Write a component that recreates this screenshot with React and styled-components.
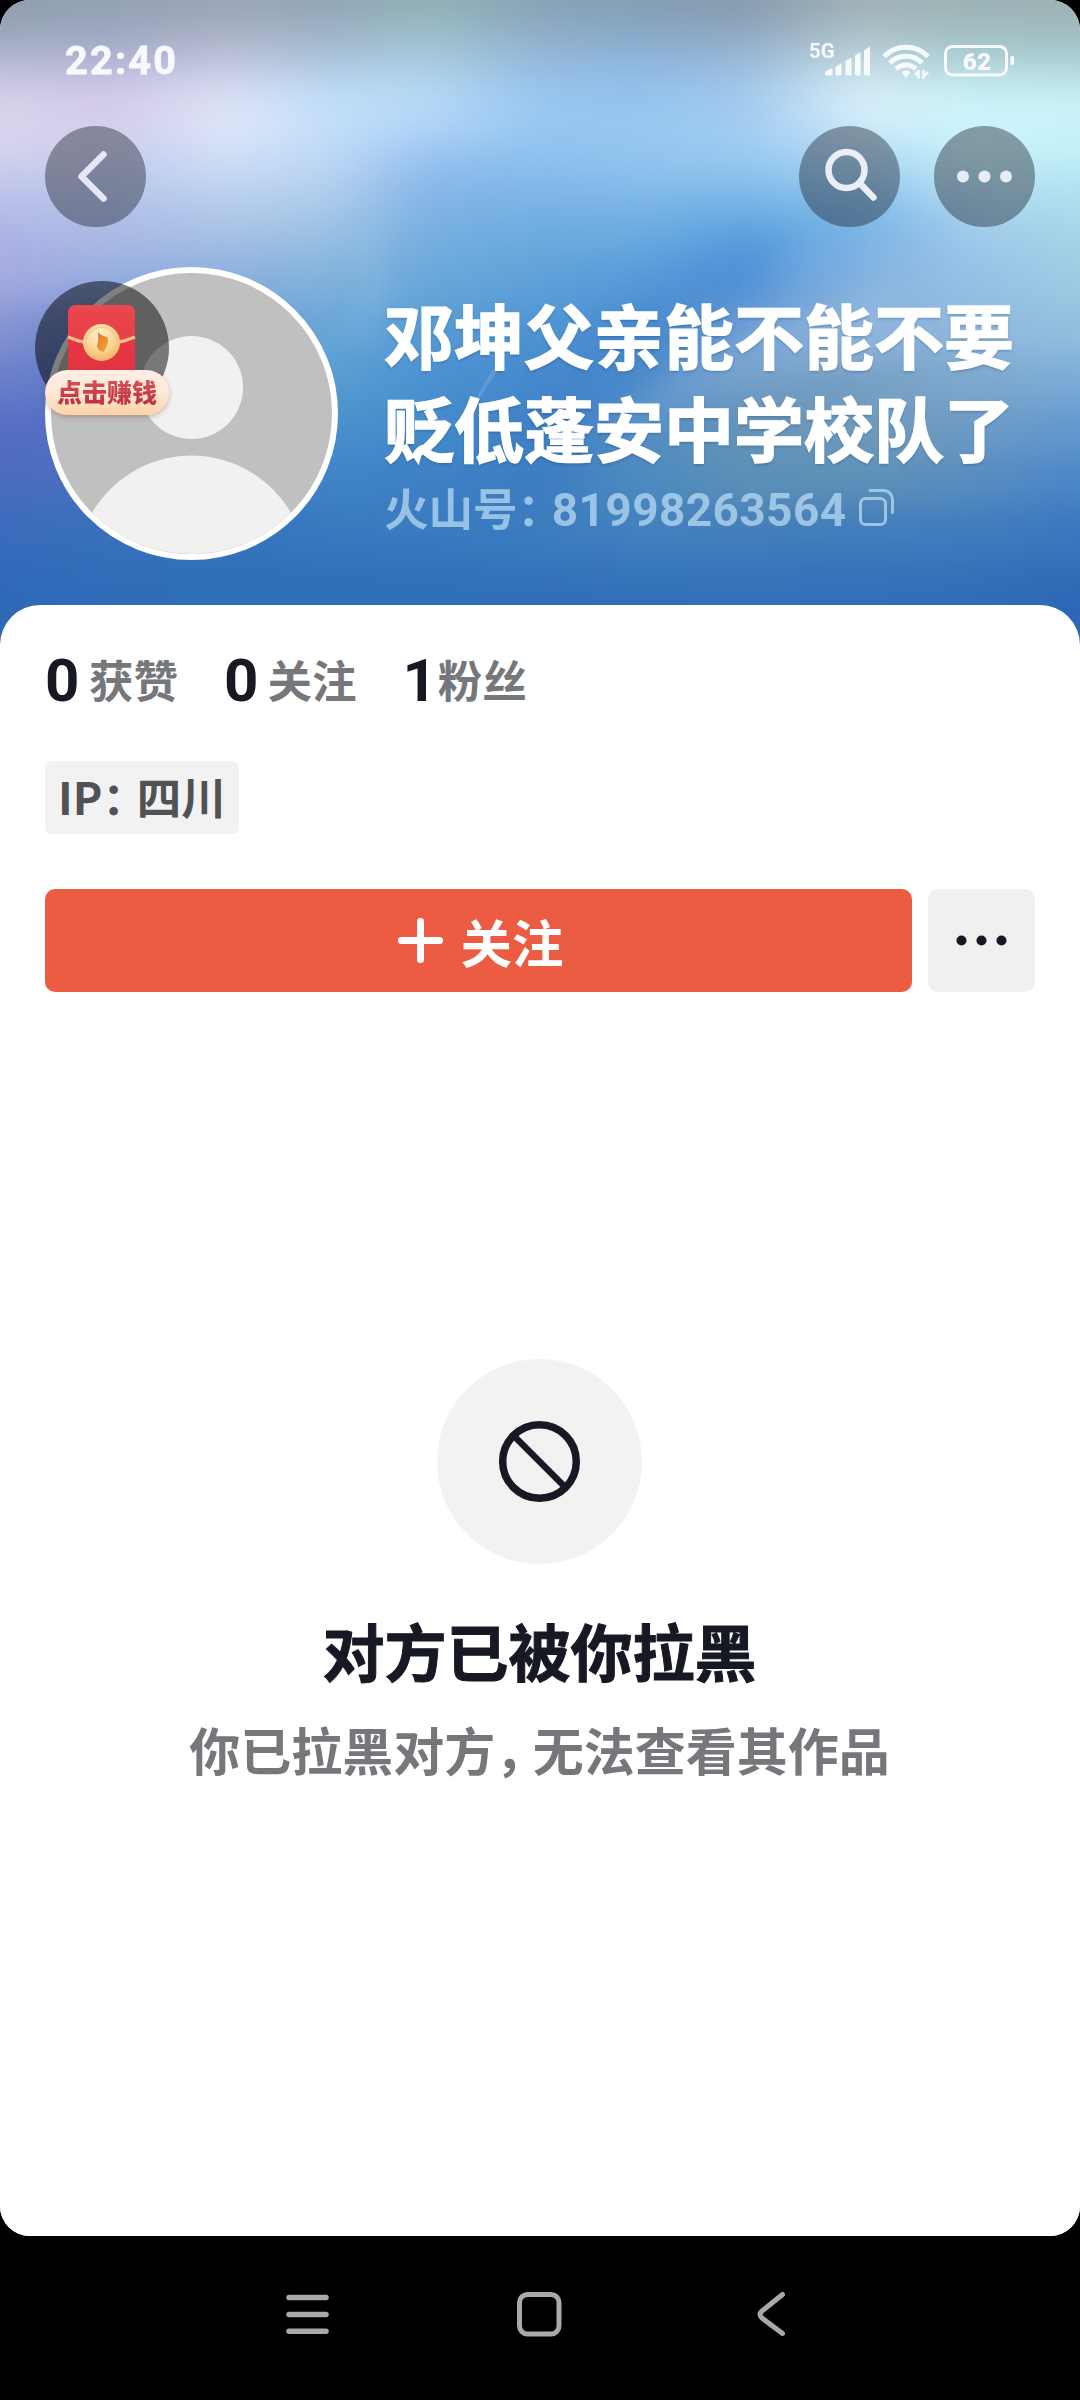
import React from 'react';
import styled, { createGlobalStyle } from 'styled-components';

const GlobalStyle = createGlobalStyle`
  * {
    box-sizing: border-box;
  }

  body {
    margin: 0;
    background: #000;
    font-family: 'Noto Sans CJK SC', sans-serif;
    font-weight: 700;
  }

  svg {
    display: block;
    flex: none;
  }
`;

const Phone = styled.div`
  width: 1080px;
  height: 2400px;
  background: #000;
  display: flex;
  flex-direction: column;
`;

const Screen = styled.div`
  height: 2236px;
  border-radius: 30px;
  overflow: hidden;
  background: #fff;
  display: flex;
  flex-direction: column;
`;

const Header = styled.header`
  position: relative;
  height: 645px;
  margin-bottom: -40px;
  flex: none;
`;

const CoverSvg = styled.svg`
  position: absolute;
  top: 0;
  left: 0;
`;

const HeaderContent = styled.div`
  position: relative;
  display: flex;
  flex-direction: column;
`;

const StatusBar = styled.div`
  height: 126px;
  padding: 0 66px 6px 65px;
  display: flex;
  align-items: center;
  justify-content: space-between;
`;

const Clock = styled.span`
  font-family: Roboto, sans-serif;
  font-size: 39.5px;
  line-height: 48px;
  letter-spacing: 2.3px;
  padding-top: 2px;
  color: #f7f9ff;
  -webkit-text-stroke: 0.8px #f7f9ff;
`;

const StatusIcons = styled.div`
  display: flex;
  align-items: center;
`;

const TopBar = styled.div`
  display: flex;
  align-items: center;
  gap: 34px;
  padding: 0 45px;
`;

const RoundButton = styled.button`
  width: 101px;
  height: 101px;
  padding: 0;
  border: none;
  border-radius: 50%;
  background: rgba(22, 24, 35, 0.4);
  margin-right: ${(props) => (props.$pushRest ? 'auto' : '0')};
`;

const Profile = styled.div`
  display: flex;
  padding: 40px 45px 0;
  gap: 46px;
`;

const AvatarWrap = styled.div`
  position: relative;
  width: 293px;
  height: 293px;
  flex: none;
`;

const Avatar = styled.div`
  width: 293px;
  height: 293px;
  border: 6px solid #fff;
  border-radius: 50%;
  overflow: hidden;
  background: #c0c0c0;
`;

const EarnWidget = styled.div`
  position: absolute;
  left: -10px;
  top: 14px;
  width: 134px;
  height: 134px;
  border-radius: 50%;
  background: rgba(0, 0, 0, 0.5);
`;

const EarnLabel = styled.div`
  position: absolute;
  left: 10px;
  top: 89px;
  width: 124px;
  height: 45px;
  border-radius: 23px;
  background: linear-gradient(#fdeee6, #fce9d6 50%, #fdd3a4);
  box-shadow: 0 2px 5px rgba(120, 70, 40, 0.35);
  text-align: center;

  span {
    font-size: 25px;
    line-height: 43px;
    font-weight: 900;
    white-space: nowrap;
    color: transparent;
    background: linear-gradient(#dd5a5f, #b82a42);
    background-clip: text;
  }
`;

const Info = styled.div`
  padding-top: 20px;
  flex: 1;
`;

const Name = styled.h1`
  margin: 0;
  font-size: 70px;
  line-height: 93px;
  font-weight: 700;
  color: #fff;
  -webkit-text-stroke: 1.4px #fff;
  text-shadow: 0 2px 3px rgba(0, 30, 80, 0.25);
`;

const UserId = styled.div`
  display: flex;
  align-items: center;
  gap: 12px;
  margin-top: 4px;
  font-size: 44.5px;
  line-height: 60px;
  color: rgba(184, 217, 240, 0.75);
`;

/* full-width punctuation set at half width */
const Punctuation = styled.span`
  font-feature-settings: 'halt';
  margin-right: 12px;
`;

const Digits = styled.span`
  font-family: Roboto, sans-serif;
  font-size: 46px;
  line-height: 1;
  letter-spacing: 0.4px;
`;

const Sheet = styled.main`
  position: relative;
  flex: 1;
  padding: 36px 45px 0;
  border-radius: 40px 40px 0 0;
  background: #fff;
`;

const Stats = styled.div`
  display: flex;
  height: 70px;
  align-items: center;
`;

const Stat = styled.div`
  display: flex;
  align-items: center;
  margin-right: 46px;
`;

const StatValue = styled.span`
  font-family: Roboto, sans-serif;
  font-size: 60px;
  line-height: 60px;
  padding-top: 9px;
  color: #161823;
  margin-right: ${(props) => props.$gap}px;
`;

const StatLabel = styled.span`
  font-size: 44.5px;
  line-height: 64px;
  padding-top: 6px;
  color: #75777b;
`;

const IpTag = styled.div`
  width: 194px;
  height: 73px;
  margin-top: 50px;
  padding: 5px 0 0 13px;
  border-radius: 6px;
  background: #f2f2f3;
  font-size: 44.5px;
  line-height: 60px;
  white-space: nowrap;
  color: #505255;
`;

const Actions = styled.div`
  display: flex;
  gap: 16px;
  margin-top: 55px;
`;

const FollowButton = styled.button`
  flex: 1;
  height: 103px;
  border: none;
  border-radius: 10px;
  padding: 0 0 0 5px;
  background: #eb5c42;
  color: #fff;
  font: inherit;
  font-size: 51.5px;
  line-height: 70px;
  display: flex;
  align-items: center;
  justify-content: center;
  gap: 17px;
`;

const MoreButton = styled.button`
  width: 107px;
  height: 103px;
  border: none;
  border-radius: 10px;
  padding: 0;
  background: #f0f0f0;
`;

const Empty = styled.section`
  display: flex;
  flex-direction: column;
  align-items: center;
  padding: 367px 1px 0 0;
`;

const BlockIcon = styled.div`
  width: 205px;
  height: 205px;
  border-radius: 50%;
  background: #f2f2f2;
`;

const EmptyTitle = styled.h2`
  margin: 41px 0 0;
  font-size: 62px;
  line-height: 90px;
  font-weight: 700;
  color: #161823;
  -webkit-text-stroke: 1px #161823;
`;

const EmptyText = styled.p`
  margin: 19px 0 0;
  font-size: 51px;
  line-height: 70px;
  color: #75777b;
`;

const NavBar = styled.nav`
  display: flex;
  justify-content: space-between;
  padding: 50px 281px 0 279px;
`;

// Colour stops of the cover, one row of stops per y position
const coverStops = [0, 110, 230, 330, 430, 540, 640, 740, 860, 970, 1080];
const coverRows = [
  { y: 0, colors: ['8f9ead', '93a1b1', '9aa4b6', '8fa5b5', '91b0b5', '87a1b4', '849cb3', '8599ab', '9fb0b5', '9bb2b4', '9cb0b4'] },
  { y: 30, colors: ['98a5b8', '9ba7bf', 'a8afc2', '9cb1c4', '9abcc4', '8eacc4', '88a8c4', '8da6bd', 'abbec5', 'a1bcc0', 'a2bbbf'] },
  { y: 60, colors: ['b4b6d0', 'b0b4d2', 'bfc4dd', 'aac4dc', 'a9cbdd', '94b9dc', '8eb4db', '98b8d9', 'c0d7e0', 'acd0d5', 'abcfd3'] },
  { y: 90, colors: ['d2cde8', 'd2c8e7', 'd9def3', 'bddcf6', 'b4d8f4', '97c4ee', '92c1ec', '9fc7ea', 'd6edf6', 'c8eff6', 'c4edf4'] },
  { y: 120, colors: ['dcd6ee', 'd5cdeb', 'dfe7fa', 'c3e0fb', 'b6d8f8', '9ac8f1', '98c7f1', 'a2cbf0', 'd6eefb', 'cff6fd', 'ccf4fb'] },
  { y: 150, colors: ['d5d3ee', 'ccceec', 'd4e1f7', 'bfdaf7', '9dc6f1', '8ec2ee', '95c6f0', '9bcbf0', 'b5ddf6', 'c9f1fb', 'c3f0f8'] },
  { y: 180, colors: ['c5c8eb', 'bccaed', 'c2d7f2', 'b6d1f0', '89b8ea', '84baea', '89bdeb', '89bfec', '9accef', 'b9e3f5', 'b4e6f2'] },
  { y: 210, colors: ['b5bce8', 'b0c0e8', 'b3cbea', 'a8c9e8', '7fb2e4', '76b1e3', '78b3e5', '6dafe4', '7ab8e6', 'a9d2ef', 'addbea'] },
  { y: 240, colors: ['adb2e4', 'a9b8e3', 'a3bee3', '95bee1', '74aedf', '6aaade', '67a9de', '569cde', '7ab2e4', '9ec7ea', 'a3d4e7'] },
  { y: 280, colors: ['a3a9df', '93ace0', '8aafdb', '80b2db', '68a7d9', '5ea0d8', '5699d8', '5394d8', '86b3e0', '96bfe5', '9dcce3'] },
  { y: 330, colors: ['8594d3', '6787c9', '6596cf', '6aa8d8', '579bd4', '4e94d2', '4a8dd1', '6a9cd4', '88b0d9', '8fb9dd', '94bfde'] },
  { y: 380, colors: ['6b7fca', '5776c6', '5886c8', '589ed2', '4b91cf', '4488cd', '4f8bcb', '6d9bc5', '769fc4', '7ea8ce', '7cacd7'] },
  { y: 430, colors: ['556cc5', '5370c3', '4c7cc2', '4890cd', '438bc9', '4080c7', '538ec6', '6594b9', '6f9abb', '6d9ac3', '6198cf'] },
  { y: 480, colors: ['4a6bc0', '4970bf', '4077c0', '3f84c7', '3e80c6', '3f7ec2', '4c8abf', '5b90b7', '5e91b8', '588dbf', '4b86c8'] },
  { y: 530, colors: ['3a6bbc', '3870bc', '3574bd', '377abf', '387bc1', '3c7dbf', '4380bf', '447fbc', '427dbc', '417dbd', '3b76bf'] },
  { y: 580, colors: ['3169b8', '306eba', '2f6fba', '3070bb', '3171bb', '3372ba', '3474ba', '3574ba', '3473ba', '3270b8', '306bb7'] },
  { y: 615, colors: ['2e69b6', '2e6bb7', '2e6cb7', '2e6cb7', '2e6cb7', '2f6db7', '2f6db7', '306db7', '2f6db7', '2e6bb6', '2c66b5'] },
];

function Cover() {
  return (
    <CoverSvg width="1080" height="645" viewBox="0 0 1080 645">
      <defs>
        {coverRows.map((row) => (
          <linearGradient key={row.y} id={`row${row.y}`} gradientUnits="userSpaceOnUse" x1="0" y1="0" x2="1080" y2="0">
            {row.colors.map((color, i) => (
              <stop key={coverStops[i]} offset={coverStops[i] / 1080} stopColor={`#${color}`} />
            ))}
          </linearGradient>
        ))}
        <filter id="meshBlur" filterUnits="userSpaceOnUse" x="-100" y="-100" width="1280" height="860" colorInterpolationFilters="sRGB">
          <feGaussianBlur stdDeviation="20 17" />
        </filter>
        <filter id="streakBlur" filterUnits="userSpaceOnUse" x="0" y="0" width="1080" height="645" colorInterpolationFilters="sRGB">
          <feGaussianBlur stdDeviation="14" />
        </filter>
      </defs>
      <g filter="url(#meshBlur)">
        {coverRows.map((row, i) => {
          const prev = coverRows[i - 1];
          const next = coverRows[i + 1];
          const top = prev ? (prev.y + row.y) / 2 : -80;
          const bottom = next ? (next.y + row.y) / 2 : 740;
          return <rect key={row.y} x="-80" y={top} width="1240" height={bottom - top + 1} fill={`url(#row${row.y})`} />;
        })}
      </g>
      <g filter="url(#streakBlur)">
        <path d="M352 230q22 50 0 110l18 0q24-60 6-110z" fill="#a9cdf0" opacity=".22" />
        <path d="M780 235L700 265Q600 320 550 390L490 510L550 500Q600 400 700 340Q770 295 780 235z" fill="#2f72c4" opacity=".15" />
        <path d="M900 290Q700 320 600 440Q720 380 900 360z" fill="#b0cdec" opacity=".18" />
      </g>
      <path d="M498 362Q478 390 468 418Q485 388 501 366z" fill="#9cc8ee" opacity=".25" />
    </CoverSvg>
  );
}

function SignalIcon() {
  return (
    <svg width="66" height="46" viewBox="805 36 66 46" fill="#f7fbff">
      <text x="809" y="57" fontSize="20.500" fontWeight="700" fontFamily="Roboto, sans-serif">5G</text>
      <path d="M825 71l6-3.500q1.500 0 1.500 1.500v5.500h-6q-1.500 0-1.500-1.500z" />
      <path d="M835.500 66l6-4v12.500h-4.500q-1.500 0-1.500-1.500z" />
      <path d="M845.500 60l6-3.500v18h-4.500q-1.500 0-1.500-1.500z" />
      <path d="M855 54.500l5.500-3.500v23.500h-4q-1.500 0-1.500-1.500z" />
      <path d="M864 49.500l6-4v29h-4.500q-1.500 0-1.500-1.500z" />
    </svg>
  );
}

function WifiIcon() {
  return (
    <svg width="73" height="46" viewBox="871 36 73 46" fill="none" stroke="#f7fbff" strokeWidth="5">
      <path d="M884 55.500a31 31 0 0 1 44 0" />
      <path d="M890 62a22.500 22.500 0 0 1 32 0" />
      <path d="M896 68a14.500 14.500 0 0 1 20 0" />
      <path d="M906 77l-4.500-5.500q4.500-4.500 9 0z" fill="#f7fbff" stroke="none" />
      <path d="M918.500 69v8.500M923.500 69v8.500M918.500 70l-3.500 4M923.500 76l4.500-5" strokeWidth="2.500" />
    </svg>
  );
}

function BatteryIcon() {
  return (
    <svg width="70" height="46" viewBox="944 36 70 46">
      <rect x="945.500" y="45.500" width="61" height="28.500" rx="7" fill="none" stroke="#f7fbff" strokeWidth="3" />
      <rect x="1010.500" y="55" width="3.500" height="9" rx="1.500" fill="#f7fbff" />
      <text x="977" y="69" textAnchor="middle" fontSize="24.500" fontWeight="900" fontFamily="Roboto, sans-serif" fill="#f7fbff">62</text>
    </svg>
  );
}

function RedPacket() {
  return (
    <svg width="134" height="134" viewBox="35 281 134 134">
      <defs>
        <linearGradient id="packet" x1="0" y1="0" x2="0" y2="1">
          <stop offset="0" stopColor="#e8474f" />
          <stop offset=".2" stopColor="#e53a45" />
          <stop offset="1" stopColor="#e2323f" />
        </linearGradient>
        <radialGradient id="coin" cx=".45" cy=".3" r=".75">
          <stop offset="0" stopColor="#fdf0cf" />
          <stop offset=".6" stopColor="#f9d38e" />
          <stop offset="1" stopColor="#f0ad62" />
        </radialGradient>
        <linearGradient id="flame" x1="0" y1="0" x2="1" y2="1">
          <stop offset="0" stopColor="#e2731c" />
          <stop offset="1" stopColor="#f7a64e" />
        </linearGradient>
      </defs>
      <rect x="68" y="305" width="67" height="80" rx="8" fill="url(#packet)" />
      <path d="M76 305h51q8 0 8 8v24q-33 19-67 0v-24q0-8 8-8z" fill="#ee4a50" opacity=".5" />
      <path d="M68 337q33 14 67 0" fill="none" stroke="#f8c08a" strokeWidth="3" />
      <circle cx="101.500" cy="342.500" r="18.500" fill="url(#coin)" />
      <circle cx="101.500" cy="342.500" r="15.500" fill="none" stroke="#f6c27c" strokeWidth="1" />
      <path d="M98 332q3 4 9.500 5q2 7-4 15q-5-1-6.500-5q2-7 1-15z" fill="url(#flame)" />
    </svg>
  );
}

const stats = [
  { value: 0, label: '获赞', gap: 9.5 },
  { value: 0, label: '关注', gap: 9 },
  { value: 1, label: '粉丝', gap: 1 },
];

function App() {
  return (
    <Phone>
      <GlobalStyle />
      <Screen>
        <Header>
          <Cover />
          <HeaderContent>
            <StatusBar>
              <Clock>22:40</Clock>
              <StatusIcons>
                <SignalIcon />
                <WifiIcon />
                <BatteryIcon />
              </StatusIcons>
            </StatusBar>

            <TopBar>
              <RoundButton $pushRest>
                <svg width="101" height="101" viewBox="45 126 101 101" fill="none" stroke="#e6e6f5" strokeWidth="6.500" strokeLinecap="round" strokeLinejoin="round">
                  <path d="M103.500 154.500L81.500 176.500l22 22" />
                </svg>
              </RoundButton>
              <RoundButton>
                <svg width="101" height="101" viewBox="799 126 101 101" fill="none" stroke="#ebeef8" strokeWidth="6.500" strokeLinecap="round">
                  <circle cx="846.500" cy="170" r="18" />
                  <path d="M860.500 184l13 13.500" />
                </svg>
              </RoundButton>
              <RoundButton>
                <svg width="101" height="101" viewBox="934 126 101 101" fill="#e8edf5">
                  <circle cx="963" cy="176.500" r="6" />
                  <circle cx="984.500" cy="176.500" r="6" />
                  <circle cx="1006" cy="176.500" r="6" />
                </svg>
              </RoundButton>
            </TopBar>

            <Profile>
              <AvatarWrap>
                <Avatar>
                  <svg width="281" height="281" viewBox="51 273 281 281" fill="#f1f1f1">
                    <circle cx="191.500" cy="387.500" r="51.500" />
                    <circle cx="191.500" cy="570.500" r="115" />
                  </svg>
                </Avatar>
                <EarnWidget>
                  <RedPacket />
                  <EarnLabel>
                    <span>点击赚钱</span>
                  </EarnLabel>
                </EarnWidget>
              </AvatarWrap>
              <Info>
                <Name>邓坤父亲能不能不要贬低蓬安中学校队了</Name>
                <UserId>
                  <span>
                    火山号<Punctuation>：</Punctuation>
                    <Digits>81998263564</Digits>
                  </span>
                  <svg width="36" height="37" viewBox="860 489 36 37" fill="none" stroke="rgba(184, 217, 240, 0.75)" strokeWidth="3">
                    <rect x="861.500" y="498.500" width="25" height="26" rx="5" />
                    <path d="M871 490.500h13.500a9 9 0 0 1 9 9v13" strokeLinecap="round" />
                  </svg>
                </UserId>
              </Info>
            </Profile>
          </HeaderContent>
        </Header>

        <Sheet>
          <Stats>
            {stats.map((stat) => (
              <Stat key={stat.label}>
                <StatValue $gap={stat.gap}>{stat.value}</StatValue>
                <StatLabel>{stat.label}</StatLabel>
              </Stat>
            ))}
          </Stats>
          <IpTag>
            IP<Punctuation>：</Punctuation>四川
          </IpTag>
          <Actions>
            <FollowButton>
              <svg width="45" height="45" viewBox="0 0 45 45" stroke="#fff" strokeWidth="7" strokeLinecap="round">
                <path d="M22.500 3.500v38M3.500 22.500h38" />
              </svg>
              <span>关注</span>
            </FollowButton>
            <MoreButton>
              <svg width="107" height="103" viewBox="928 889 107 103" fill="#161823">
                <circle cx="961.500" cy="940.500" r="5" />
                <circle cx="981.500" cy="940.500" r="5" />
                <circle cx="1001.500" cy="940.500" r="5" />
              </svg>
            </MoreButton>
          </Actions>

          <Empty>
            <BlockIcon>
              <svg width="205" height="205" viewBox="437 1359 205 205" fill="none" stroke="#161823">
                <circle cx="539.500" cy="1461.500" r="36.800" strokeWidth="7.500" />
                <path d="M513.500 1435.500l52 52" strokeWidth="6.500" />
              </svg>
            </BlockIcon>
            <EmptyTitle>对方已被你拉黑</EmptyTitle>
            <EmptyText>
              你已拉黑对方<Punctuation>，</Punctuation>无法查看其作品
            </EmptyText>
          </Empty>
        </Sheet>
      </Screen>

      <NavBar>
        <svg width="56" height="56" viewBox="279 2286 56 56" stroke="#a9a9a9" strokeWidth="5.500" strokeLinecap="round">
          <path d="M289 2297.500h37M289 2314.500h37M289 2331.300h37" />
        </svg>
        <svg width="56" height="56" viewBox="511 2286 56 56" fill="none" stroke="#a9a9a9" strokeWidth="5">
          <rect x="519.500" y="2294.500" width="39.500" height="39.500" rx="8" />
        </svg>
        <svg width="56" height="56" viewBox="743 2286 56 56" fill="none" stroke="#a9a9a9" strokeWidth="5" strokeLinecap="round">
          <path d="M782.500 2294.500L762 2311q-4 3.500 0 7L782.500 2333.500" />
        </svg>
      </NavBar>
    </Phone>
  );
}

export default App;
